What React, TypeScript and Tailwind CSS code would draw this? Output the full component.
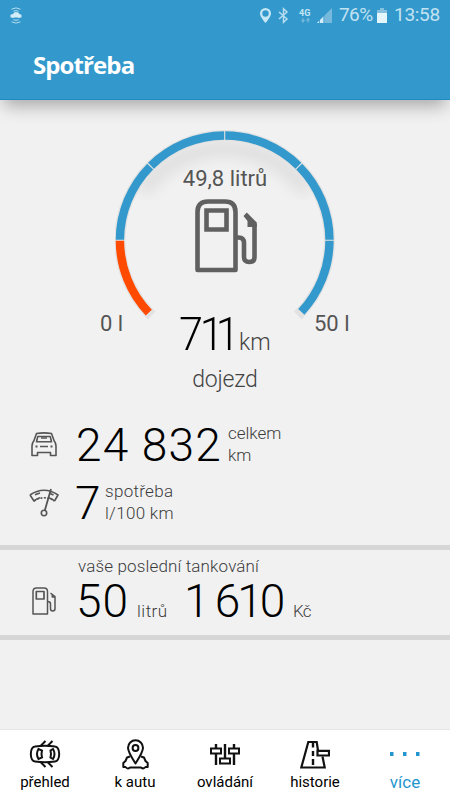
import type { ReactNode } from 'react'

const BLUE = '#3399cc'
const RED = '#ff4a00'

// Gauge geometry, angles in degrees clockwise from 3 o'clock
const CX = 109.7
const CY = 110.3
const R = 104.8

function arc(from: number, to: number, r = R) {
  const rad = Math.PI / 180
  const x1 = CX + r * Math.cos(from * rad)
  const y1 = CY + r * Math.sin(from * rad)
  const x2 = CX + r * Math.cos(to * rad)
  const y2 = CY + r * Math.sin(to * rad)
  const large = to - from > 180 ? 1 : 0
  return `M${x1} ${y1}A${r} ${r} 0 ${large} 1 ${x2} ${y2}`
}

const segments = [
  { from: 136.4, to: 179.7, color: RED },
  { from: 180.3, to: 224.7, color: BLUE },
  { from: 225.3, to: 269.7, color: BLUE },
  { from: 270.3, to: 314.7, color: BLUE },
  { from: 315.3, to: 359.7, color: BLUE },
  { from: 360.3, to: 403, color: BLUE },
]

function Gauge() {
  return (
    <svg className="absolute left-[115px] top-[30px]" width="220" height="220" viewBox="0 0 220 220">
      <defs>
        <filter id="soft" x="-20%" y="-20%" width="140%" height="140%">
          <feGaussianBlur stdDeviation="7" />
        </filter>
        <clipPath id="dial">
          <circle cx={CX} cy={CY} r="101" />
        </clipPath>
      </defs>
      <g clipPath="url(#dial)">
        <path d={arc(215, 325, 101)} transform="translate(0 9)" fill="none" stroke="#000" strokeOpacity=".08" strokeWidth="16" filter="url(#soft)" />
      </g>
      <path d={arc(134.2, 405.8)} fill="none" stroke="#e2e2e2" strokeWidth="11" />
      {segments.map((s) => (
        <path key={s.from} d={arc(s.from, s.to)} fill="none" stroke={s.color} strokeWidth="8.4" />
      ))}
    </svg>
  )
}

function PumpIcon({ className }: { className: string }) {
  return (
    <svg className={className} viewBox="0 0 64 74" fill="none" stroke="currentColor" strokeWidth="4.600" strokeLinejoin="round">
      <path d="M2.500 71V13Q2.500 2.500 13 2.500H30Q40.500 2.500 40.500 13V71Z" />
      <path d="M11.500 11.500H31.500V30.500H11.500Z" strokeLinejoin="miter" />
      <path d="M40.500 38.500H43.500Q49 38.500 49 44V58Q49 63 54.200 63Q59.500 63 59.500 58V25" />
      <path d="M48.500 17L51.800 13.500L61.800 23.500V28H52.500V22Z" fill="currentColor" stroke="none" />
    </svg>
  )
}

function SmallPumpIcon() {
  return (
    <svg className="-mt-[2px]" width="24" height="28" viewBox="0 0 24 28" fill="none" stroke="#555" strokeWidth="1.500" strokeLinejoin="round">
      <path d="M1 27V4.500Q1 1 4.500 1H12Q15.500 1 15.500 4.500V27Z" />
      <path d="M4.300 4.500H12V12H4.300Z" strokeWidth="1.700" />
      <path d="M15.500 14.500Q18.500 14.500 18.500 17V21.500Q18.500 24 20.800 24Q23 24 23 21.500V9.500L18.500 6.200M20.300 7.500V10H22.500" />
    </svg>
  )
}

function CarIcon() {
  return (
    <svg width="26" height="25" viewBox="0 0 26 25" fill="none" stroke="#555" strokeWidth="1.600" strokeLinejoin="round">
      <path d="M5.500 1.500Q13 .2 20.500 1.500L23 8.500Q25 11 25 14V23.500H19.500V20.500H6.500V23.500H1V14Q1 11 3 8.500Z" />
      <path d="M6.800 4.500H19.200L20.500 9.800H5.500Z" />
      <path d="M10 6H16M9 14.500H17" />
      <path d="M4.500 14.500H6.500M19.500 14.500H21.500" strokeWidth="1.800" />
    </svg>
  )
}

function ConsumptionIcon() {
  return (
    <svg width="30" height="29" viewBox="0 0 30 29" fill="none" stroke="#555" strokeWidth="1.600" strokeLinejoin="round">
      <path d="M1 7Q15-2.500 29 7L25.500 13M1 7L5 13Q8 10.500 11 9.800M19.500 9.800Q23 10.500 25.500 13" />
      <path d="M5 13Q15 6.500 25.500 13" strokeDasharray="2 1.500" />
      <path d="M6 6.800L11 5M24.500 7L21 5.500" />
      <path d="M22 1L15.800 22.500" strokeWidth="1.800" />
      <circle cx="15" cy="25" r="2.700" />
    </svg>
  )
}

function CarSignalIcon() {
  return (
    <svg width="12" height="17" viewBox="0 0 12 17" fill="none" stroke="#b5dcef">
      <path d="M1.500 2.200Q6-.4 10.500 2.200M3.500 4.300Q6 3 8.500 4.300M3.500 12.700Q6 14 8.500 12.700M1.500 14.800Q6 17.400 10.500 14.800" />
      <path d="M.5 10.500V7.800L3 7L4.500 5.200H8L9.500 7L11.500 8V10.500H10L9 11.300L8 10.500H4L3 11.300L2 10.500Z" fill="#d3ecf7" stroke="none" />
    </svg>
  )
}

function StatusIcons() {
  return (
    <svg width="72" height="17" viewBox="0 0 72 17">
      <path d="M5.500 1A5.500 5.500 0 0 0 0 6.500C0 10 5.500 16 5.500 16S11 10 11 6.500A5.500 5.500 0 0 0 5.500 1ZM5.500 3.300A3.200 3.200 0 1 1 5.500 9.700A3.200 3.200 0 1 1 5.500 3.300Z" fill="#c5e6f4" fillRule="evenodd" />
      <path d="M19 5L27 12L23.500 15.300V1.800L27 5L19 12" fill="none" stroke="#b5dcef" strokeWidth="1.500" />
      <text x="39" y="9" fontSize="9" fontWeight="700" fontFamily="Roboto, sans-serif" fill="#c5e6f4">4G</text>
      <path d="M43 11V14.500M41.500 13L43 15L44.500 13M48 15.500V12M46.500 13.500L48 11.500L49.500 13.500" fill="none" stroke="#78b8dc" strokeWidth="1.200" />
      <path d="M72 1V16H57Z" fill="#76b9dd" />
      <path d="M64 9V16H57Z" fill="#d3ecf7" />
      <path d="M59.500 11V16M63.800 7V16" stroke="#3399cc" strokeWidth=".8" />
    </svg>
  )
}

function OverviewIcon() {
  return (
    <svg width="32" height="28" viewBox="0 0 32 28" fill="none" stroke="#111" strokeWidth="2">
      <path d="M6 6.500Q16 5 26 6.500Q30 7 30.200 14Q30 21 26 21.500Q16 23 6 21.500Q2 21 1.800 14Q2 7 6 6.500Z" />
      <path d="M9.500 9Q6.500 14 9.500 19L13 17.500Q12 14 13 10.500ZM24 9Q27 14 24 19L21.500 17.500Q22.500 14 21.500 10.500Z" />
      <path d="M11.500 6L16.500 1M18.500 6L23.500 1M11.500 22L16.500 27M18.500 22L23.500 27" />
    </svg>
  )
}

function ToCarIcon() {
  return (
    <svg width="27" height="31" viewBox="0 0 27 31" fill="none" stroke="#111" strokeWidth="2" strokeLinejoin="round">
      <path d="M13.500 24.500C10 19 6 13 6 8.800A7.500 7.500 0 0 1 21 8.800C21 13 17 19 13.500 24.500Z" />
      <circle cx="13.500" cy="9" r="2.900" />
      <path d="M8 17.500L5 18.500L3.500 22L1.300 24V28H3.500Q5.500 30.500 8 28.500H19Q21.500 30.500 23.500 28H25.700V24L23.500 22L22 18.500L19 17.500" />
    </svg>
  )
}

function ControlsIcon() {
  return (
    <svg width="30" height="21" viewBox="0 0 30 21" fill="none" stroke="#111" strokeWidth="2">
      <path d="M1 4.500H11V9.500H1ZM19 4.500H29V9.500H19ZM10 14.500H20V19.500H10Z" />
      <path d="M6 0V4M6 10V21M15 0V14M24 0V4M24 10V21" strokeWidth="2.400" />
    </svg>
  )
}

function HistoryIcon() {
  return (
    <svg width="30" height="29" viewBox="0 0 30 29" fill="none" stroke="#111" strokeWidth="2.200">
      <path d="M18 10.500L16.700 2H8.300L1.300 27.500H24.700L22.500 16.500" />
      <path d="M17.500 10.800H29V15.500H17.500Z" />
      <path d="M13 3V7.500M13 11V16M13 19V25" strokeWidth="2.400" />
    </svg>
  )
}

function DotsIcon() {
  return (
    <svg width="32" height="4" viewBox="0 0 32 4" fill="#2496cf">
      <path d="M1 0H4.500V4H1ZM14 0H17.500V4H14ZM27 0H30.500V4H27Z" />
    </svg>
  )
}

function NavItem({ icon, label, active }: { icon: ReactNode; label: string; active?: boolean }) {
  return (
    <button className="flex w-[90px] flex-col items-center">
      <span className="flex h-[38px] items-center justify-center pt-[2px]">{icon}</span>
      <span className={active ? 'text-[17px] leading-5 text-[#2496cf]' : 'text-[15px] leading-5 text-black'}>{label}</span>
    </button>
  )
}

export default function App() {
  return (
    <div className="flex h-[800px] w-[450px] flex-col overflow-hidden bg-[#f1f1f1] font-['Roboto',sans-serif] text-[#555]">
      <header className="relative z-10 h-[100px] shrink-0 border-b border-[#1c8cc4] bg-[#3399cc] shadow-[0_10px_16px_-4px_rgba(0,0,0,0.3)]">
        <div className="flex h-[31px] items-center pl-[10px] pr-[10px] text-[19px] text-[#c2e2f1]">
          <CarSignalIcon />
          <div className="ml-auto flex items-center">
            <StatusIcons />
            <span className="ml-[7px] w-[37px] tracking-[-0.6px]">76%</span>
            <svg className="ml-[1px]" width="10" height="15" viewBox="0 0 10 15">
              <path d="M3 0H7V2H10V5H0V2H3Z" fill="#86c1e0" />
              <path d="M0 5H10V15H0Z" fill="#e4f5fc" />
            </svg>
            <span className="ml-[7px] w-[46px] tracking-[-0.3px]">13:58</span>
          </div>
        </div>
        <h1 className="pl-[33px] pt-[16px] font-['Open_Sans',sans-serif] text-[24px] font-bold leading-9 tracking-[-0.9px] text-white">Spotřeba</h1>
      </header>

      <section className="relative h-[315px] shrink-0">
        <Gauge />
        <div className="relative flex flex-col items-center pt-[65px]">
          <div className="text-[22px] leading-7">49,8 litrů</div>
          <PumpIcon className="ml-[4px] mt-[6px] h-[74px] w-[64px] text-[#606060]" />
          <div className="mt-[36px] flex w-full items-baseline pl-[179px] leading-[50px]">
            <span className="w-[60px] origin-left scale-x-[.94] whitespace-nowrap text-[46px] font-light tracking-[-8.500px] text-black">
              <span className="tracking-[-3.500px]">7</span>11
            </span>
            <span className="text-[23px] font-light text-[#444]">km</span>
          </div>
          <div className="text-[23px] font-light leading-6 tracking-[-0.2px] text-[#444]">dojezd</div>
        </div>
        <div className="absolute left-[100px] top-[210px] text-[22px] leading-7">0 l</div>
        <div className="absolute left-[314px] top-[210px] text-[22px] leading-7">50 l</div>
      </section>

      <section className="flex h-[130px] shrink-0 flex-col text-[17px] font-light text-[#3c3c3c]">
        <div className="flex h-[58px] items-center pl-[31px]">
          <CarIcon />
          <span className="ml-[19px] w-[152px] pt-[2px] text-[46px] leading-[58px] tracking-[1.2px] text-black">24 832</span>
          <span className="leading-[22px]">celkem<br />km</span>
        </div>
        <div className="flex h-[58px] items-center pl-[29px]">
          <ConsumptionIcon />
          <span className="ml-[16px] w-[30px] pt-[2px] text-[46px] leading-[58px] text-black">7</span>
          <span className="leading-[22px] tracking-[0.3px]">spotřeba<br />l/100 km</span>
        </div>
      </section>

      <section className="h-[95px] shrink-0 border-y-[5px] border-[#d6d6d6] pl-[32px] text-[17px] font-light text-[#3c3c3c]">
        <div className="pl-[46px] pt-[5px] leading-[22px] tracking-[0.15px]">vaše poslední tankování</div>
        <div className="flex h-[50px] items-center">
          <SmallPumpIcon />
          <div className="ml-[20px] mt-[1px] flex items-baseline self-start whitespace-nowrap leading-[46px]">
            <span className="w-[61px] text-[46px] tracking-[1px] text-black">50</span>
            <span className="w-[47px] tracking-[0.5px]">litrů</span>
            <span className="w-[109px] text-[46px] tracking-[-3px] text-black [word-spacing:0px]">1 610</span>
            <span className="tracking-[-0.8px]">Kč</span>
          </div>
        </div>
      </section>

      <nav className="mt-auto flex h-[71px] shrink-0 border-t border-[#e6e6e6] bg-white pt-1">
        <NavItem icon={<OverviewIcon />} label="přehled" />
        <NavItem icon={<ToCarIcon />} label="k autu" />
        <NavItem icon={<ControlsIcon />} label="ovládání" />
        <NavItem icon={<HistoryIcon />} label="historie" />
        <NavItem icon={<DotsIcon />} label="více" active />
      </nav>
    </div>
  )
}
